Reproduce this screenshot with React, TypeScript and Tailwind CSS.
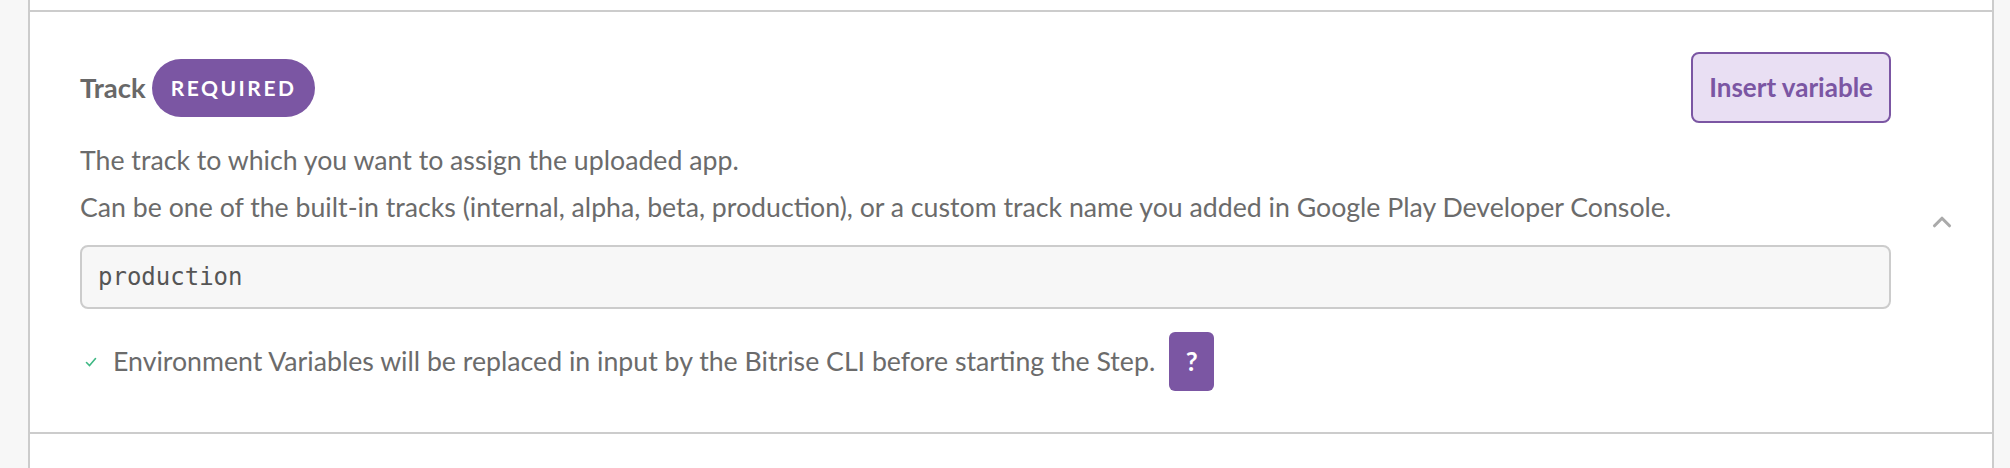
import { ChevronUp } from "lucide-react";

const font = { fontFamily: '"Lato", "Noto Sans", sans-serif' };

function HelpButton() {
  return (
    <button className="flex h-[59px] w-[45px] items-center justify-center rounded-[6px] bg-[#7b56a3] text-[26px] font-bold text-white">
      ?
    </button>
  );
}

export default function App() {
  return (
    <div className="flex h-[468px] w-full bg-[#f7f7f7]" style={font}>
      <div className="ml-[28px] flex w-[1966px] flex-col border-x-2 border-[#cccccc] bg-white">
        <div className="h-[10px]" />
        <section className="flex border-y-2 border-[#cccccc]">
          <div className="flex flex-1 flex-col pl-[50px] pt-[40px] pb-[41px]">
            <div className="flex h-[71px] items-center justify-between">
              <div className="flex items-center gap-[6px]">
                <span className="text-[27.5px] font-bold text-[#686868]">Track</span>
                <span className="flex h-[58px] items-center rounded-full bg-[#7b56a3] px-[19px] text-[21px] font-bold tracking-[0.12em] text-white">
                  REQUIRED
                </span>
              </div>
              <button className="h-[71px] rounded-[8px] border-2 border-[#7b56a3] bg-[#e9dff3] px-[16px] text-[26px] font-bold text-[#7b56a3]">
                Insert variable
              </button>
            </div>
            <p className="mt-[21px] text-[26.7px] leading-[32px] text-[#6b6b6b]">
              The track to which you want to assign the uploaded app.
            </p>
            <p className="mt-[15px] text-[26.7px] leading-[32px] text-[#6b6b6b]">
              Can be one of the built-in tracks (internal, alpha, beta, production), or a custom track name you added in
              Google Play Developer Console.
            </p>
            <div className="mt-[22px] flex h-[64px] items-center rounded-[8px] border-2 border-[#cccccc] bg-[#f7f7f7] px-[16px]">
              <span className="text-[24px] text-[#555555]" style={{ fontFamily: '"DejaVu Sans Mono", monospace' }}>
                production
              </span>
            </div>
            <div className="mt-[23px] flex h-[59px] items-center">
              <svg width="12" height="10" viewBox="0 0 12 10" className="ml-[5px]">
                <path d="M1.5 5.5l3 3 6-7" fill="none" stroke="#3fb884" strokeWidth="1.6" strokeLinecap="round" />
              </svg>
              <span className="ml-[16px] text-[26.7px] text-[#6b6b6b]">
                Environment Variables will be replaced in input by the Bitrise CLI before starting the Step.
              </span>
              <div className="ml-[14px]">
                <HelpButton />
              </div>
            </div>
          </div>
          <div className="flex w-[101px] justify-center pt-[195px]">
            <ChevronUp size={30} strokeWidth={2.5} className="text-[#aaaaaa]" />
          </div>
        </section>
        <div className="flex-1" />
      </div>
    </div>
  );
}
